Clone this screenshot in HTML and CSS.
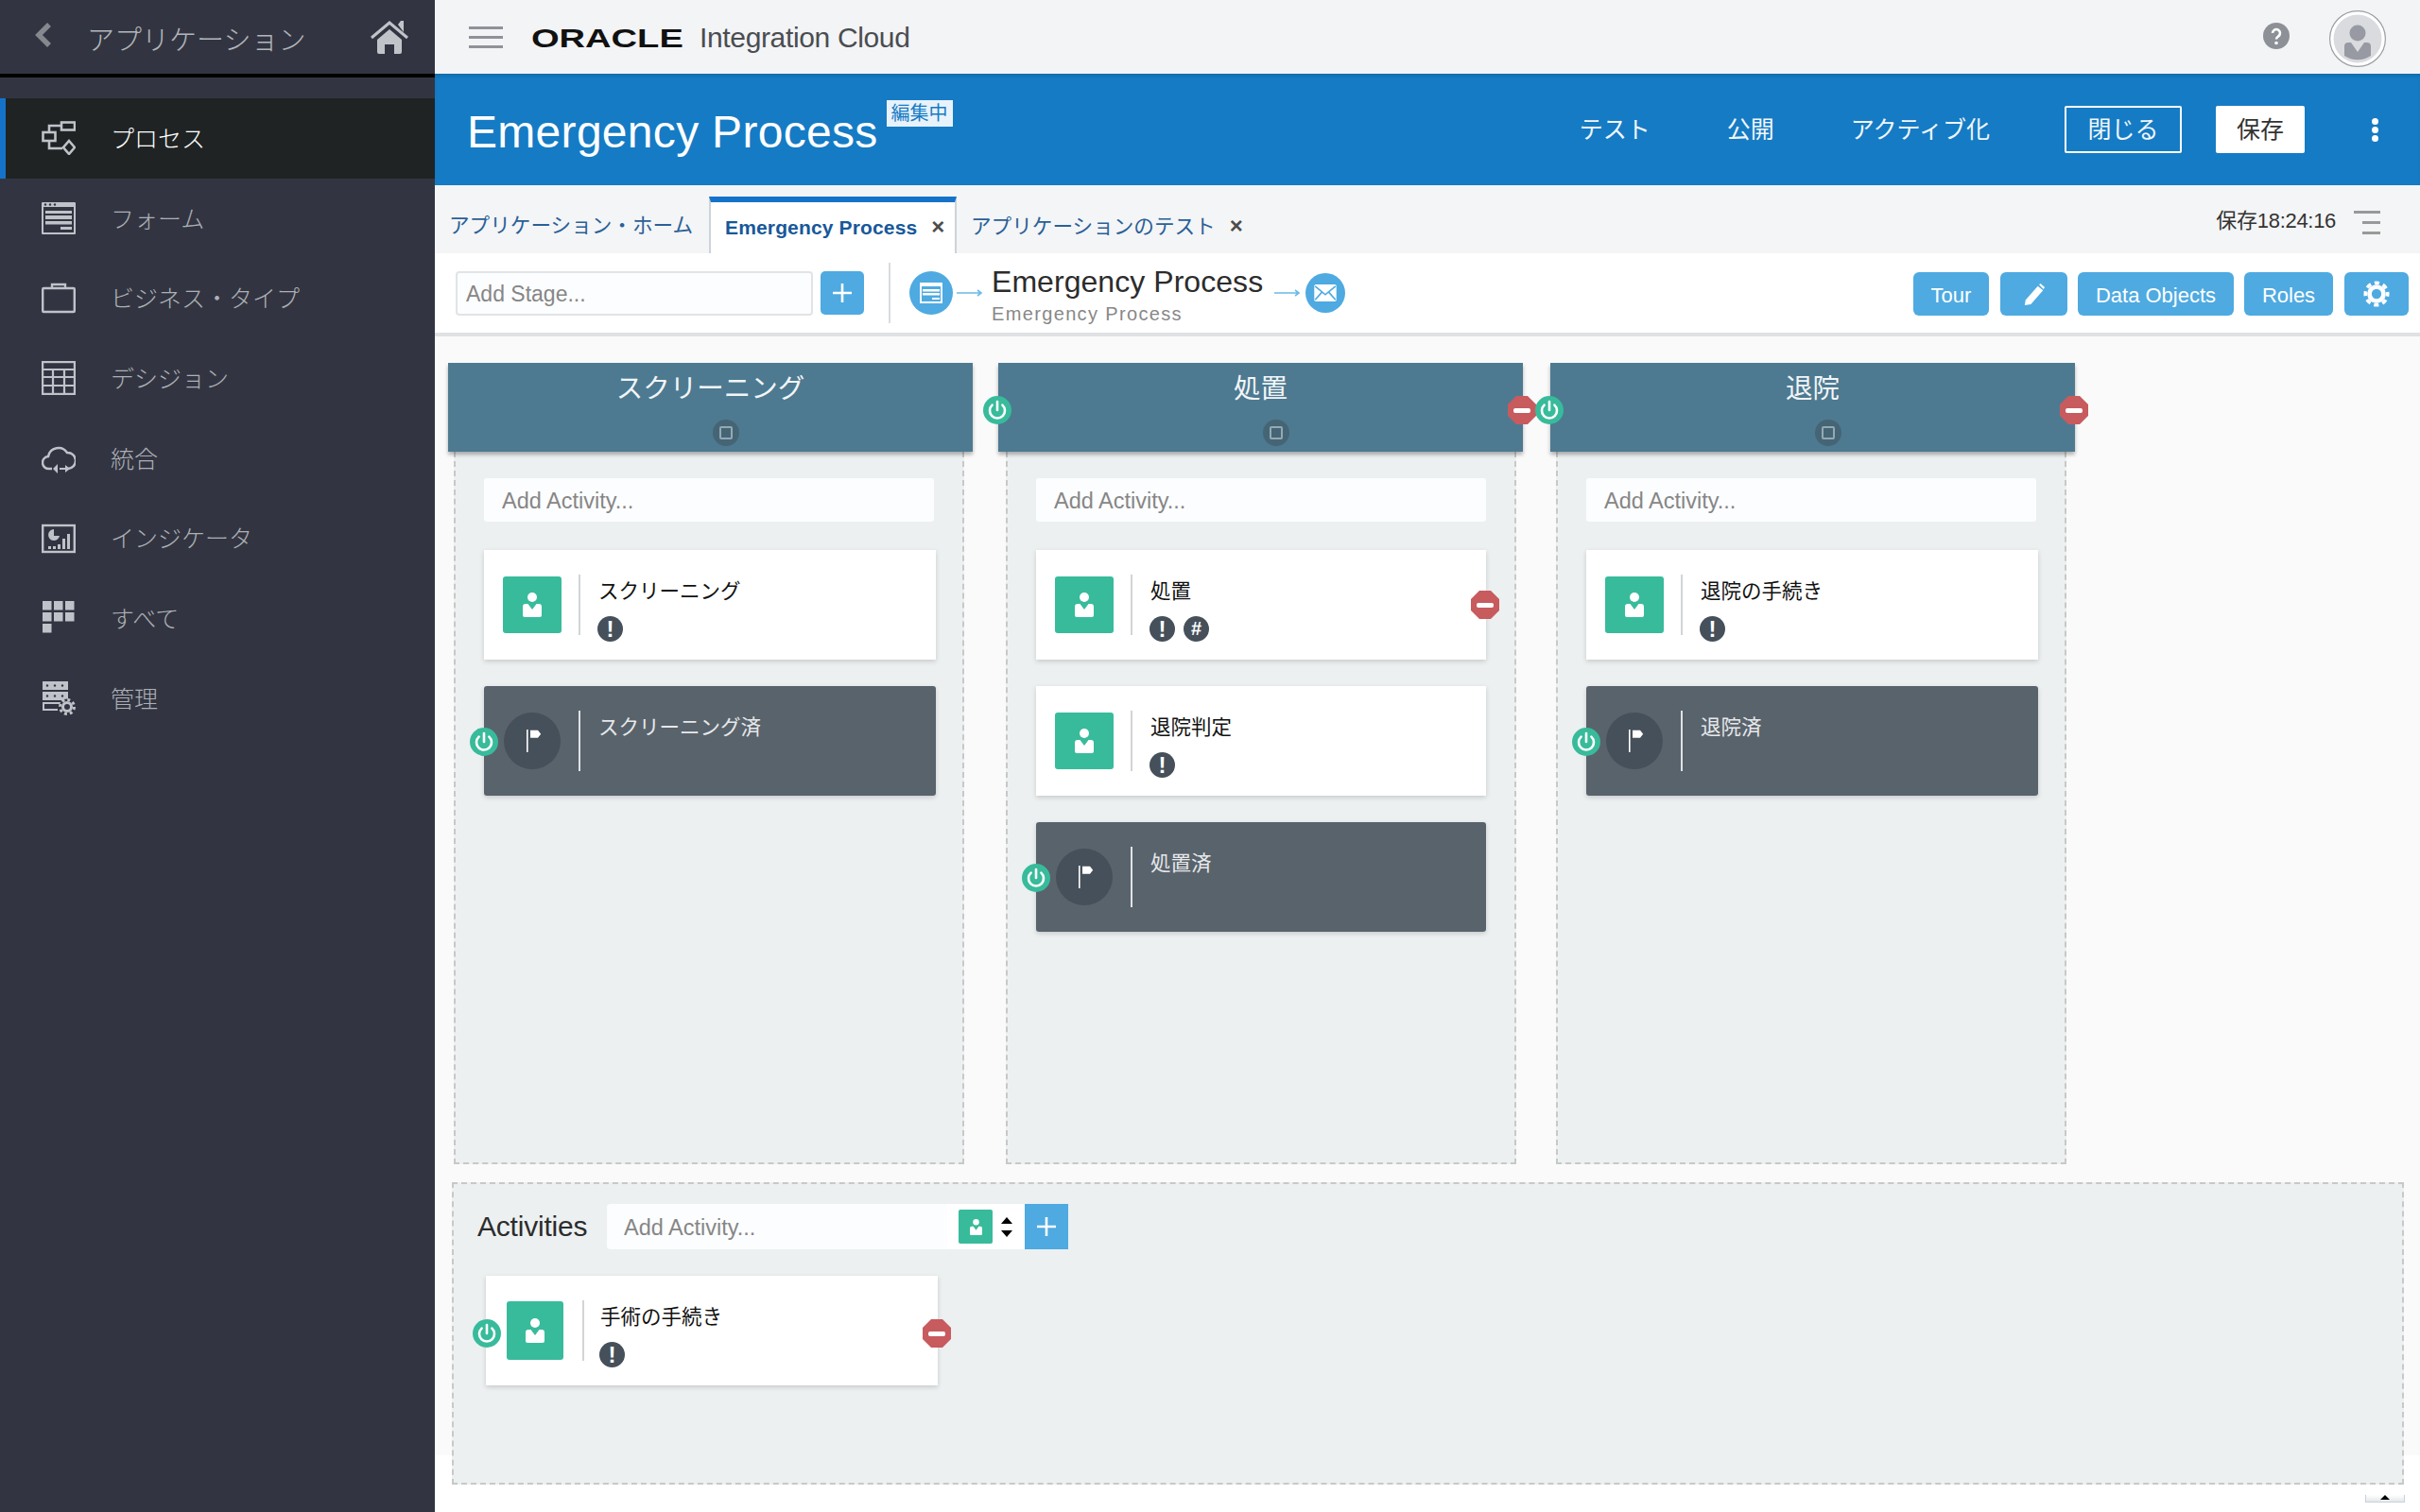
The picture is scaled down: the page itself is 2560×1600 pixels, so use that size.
FILE: index.html
```html
<!DOCTYPE html>
<html lang="ja">
<head>
<meta charset="utf-8">
<title>Emergency Process</title>
<link rel="stylesheet" href="styles.css">
</head>
<body>
<svg class="defs" width="0" height="0" aria-hidden="true">
  <defs>
    <symbol id="person" viewBox="0 0 20 26"><circle cx="10" cy="5" r="5" fill="#fff"/><path d="M0 15q0-3 3-3h2.500l4.500 6 4.500-6H17q3 0 3 3v9q0 2-2 2H2q-2 0-2-2z" fill="#fff"/></symbol>
    <symbol id="power" viewBox="0 0 30 30"><path d="M9.600 9.600a8 8 0 1 0 10.800 0" fill="none" stroke="#fff" stroke-width="2.600" stroke-linecap="round"/><path d="M15 6v9" stroke="#fff" stroke-width="2.600" stroke-linecap="round"/></symbol>
    <symbol id="flag" viewBox="0 0 20 30"><path d="M1 0v30" stroke="#fff" stroke-width="2"/><path d="M5 1h10l4 5-4 5H5z" fill="#fff"/></symbol>
  </defs>
</svg>
<div class="app">
  <aside class="sidebar">
    <div class="side-head">
      <svg class="chev" viewBox="0 0 18 26"><path d="M15 2 4 13l11 11" fill="none" stroke="#85888d" stroke-width="5.500"/></svg>
      <span class="side-title">アプリケーション</span>
      <svg class="home" viewBox="0 0 40 36"><path d="M1 19 20 3l19 16" fill="none" stroke="#c0c4c9" stroke-width="3"/><path d="M29 5l3-4h3v12z" fill="#c0c4c9"/><path d="M7 21 20 10l13 11v13a2 2 0 0 1-2 2h-6V26h-10v10H9a2 2 0 0 1-2-2z" fill="#c0c4c9"/></svg>
    </div>
    <nav class="side-nav">
      <a class="nav-item active">
        <svg class="nav-icon" viewBox="0 0 36 36"><g fill="none" stroke="#bfc3c9" stroke-width="2.600"><rect x="21" y="1.500" width="14" height="8"/><rect x="1.500" y="12" width="13" height="9"/><path d="M21 5H8v7M8 21v8h14"/><path d="M29 21l6 7-6 7-6-7z"/></g></svg>
        <span>プロセス</span>
      </a>
      <a class="nav-item">
        <svg class="nav-icon" viewBox="0 0 36 36"><rect y="1" width="36" height="34" rx="1" fill="#bfc3c9"/><rect x="2" y="6" width="32" height="27" fill="#323541"/><g fill="#323541"><circle cx="4" cy="3.500" r="1.200"/><circle cx="9" cy="3.500" r="1.200"/><circle cx="14" cy="3.500" r="1.200"/></g><g fill="#bfc3c9"><rect x="4" y="10" width="28" height="3"/><rect x="4" y="15" width="28" height="4"/><rect x="4" y="21" width="28" height="3.500"/><rect x="20" y="27" width="12" height="3"/></g></svg>
        <span>フォーム</span>
      </a>
      <a class="nav-item">
        <svg class="nav-icon" viewBox="0 0 36 36"><g fill="none" stroke="#bfc3c9" stroke-width="2.400"><rect x="1.200" y="7" width="33.600" height="25" rx="1"/><path d="M11 7V3h14v4"/></g></svg>
        <span>ビジネス・タイプ</span>
      </a>
      <a class="nav-item">
        <svg class="nav-icon" viewBox="0 0 36 36"><g fill="none" stroke="#bfc3c9" stroke-width="2.200"><rect x="1.100" y="1.100" width="33.800" height="33.800"/><path d="M1 9h34M1 17h34M1 26h34M12 9v26M24 9v26"/></g></svg>
        <span>デシジョン</span>
      </a>
      <a class="nav-item">
        <svg class="nav-icon" viewBox="0 0 36 36"><path d="M11 29H8a6.500 6.500 0 0 1-1-13 11 11 0 0 1 20-4 8.500 8.500 0 0 1 1 17h-2" fill="none" stroke="#bfc3c9" stroke-width="2.500"/><path d="M17 24l-5 5 5 5z M19 28h6v-3l5 4-5 4v-3h-6z" fill="#bfc3c9"/></svg>
        <span>統合</span>
      </a>
      <a class="nav-item">
        <svg class="nav-icon" viewBox="0 0 36 36"><rect x="1.200" y="4" width="33.600" height="28" fill="none" stroke="#bfc3c9" stroke-width="2.400"/><path d="M13 8a6 6 0 1 0 6 7h-6z" fill="#bfc3c9"/><g fill="#bfc3c9"><rect x="7" y="26" width="3" height="3"/><rect x="12" y="26" width="3" height="3"/><rect x="17" y="24" width="3" height="5"/><rect x="22" y="18" width="3" height="11"/><rect x="27" y="13" width="3" height="16"/></g></svg>
        <span>インジケータ</span>
      </a>
      <a class="nav-item">
        <svg class="nav-icon" viewBox="0 0 36 36"><g fill="#bfc3c9"><rect x="1" y="0" width="9.500" height="9.500"/><rect x="13" y="0" width="9.500" height="9.500"/><rect x="25" y="0" width="9.500" height="9.500"/><rect x="1" y="12" width="9.500" height="9.500"/><rect x="13" y="12" width="9.500" height="9.500"/><rect x="25" y="12" width="9.500" height="9.500"/><rect x="1" y="24" width="9.500" height="9.500"/></g></svg>
        <span>すべて</span>
      </a>
      <a class="nav-item">
        <svg class="nav-icon" viewBox="0 0 36 36"><path d="M1 0h27v9H1zM1 11h27v9H1z" fill="#bfc3c9"/><path d="M2 23h20" stroke="#bfc3c9" stroke-width="2"/><path d="M2 22v8h15" fill="none" stroke="#bfc3c9" stroke-width="2"/><g fill="#323541"><circle cx="6" cy="4.500" r="1.200"/><circle cx="14" cy="4.500" r="1.200"/><circle cx="22" cy="4.500" r="1.200"/><circle cx="6" cy="15.500" r="1.200"/><circle cx="14" cy="15.500" r="1.200"/><circle cx="22" cy="15.500" r="1.200"/></g><circle cx="27" cy="27" r="8.500" fill="#323541"/><circle cx="27" cy="27" r="4.500" fill="none" stroke="#bfc3c9" stroke-width="3"/><circle cx="27" cy="27" r="7.500" fill="none" stroke="#bfc3c9" stroke-width="3" stroke-dasharray="3 2.900"/></svg>
        <span>管理</span>
      </a>
    </nav>
  </aside>
  <main class="main">
    <header class="topbar">
      <div class="burger"><i></i><i></i><i></i></div>
      <span class="oracle"><span class="oracle-word">ORACLE</span></span>
      <span class="product">Integration Cloud</span>
      <svg class="help" viewBox="0 0 28 28"><circle cx="14" cy="14" r="14" fill="#8d9096"/><path d="M10 11a4 4 0 1 1 6 3.500c-1.500 1-2 1.500-2 3" fill="none" stroke="#fff" stroke-width="2.600"/><circle cx="14" cy="21.500" r="1.800" fill="#fff"/></svg>
      <svg class="avatar" viewBox="0 0 60 60"><circle cx="30" cy="30" r="29.400" fill="#fff" stroke="#9b9ea3" stroke-width="1.200"/><circle cx="30" cy="30" r="25.500" fill="#d9dbde"/><circle cx="30" cy="24" r="8.500" fill="#979aa2"/><path d="M16 48V38q0-4 4-4h3l7 10 7-10h3q4 0 4 4v10a25 25 0 0 1-28 0z" fill="#979aa2"/></svg>
    </header>
    <section class="band">
      <h1 class="band-title">Emergency Process</h1>
      <span class="badge">編集中</span>
      <div class="band-actions">
        <a class="band-link">テスト</a>
        <a class="band-link">公開</a>
        <a class="band-link">アクティブ化</a>
        <button class="btn-close">閉じる</button>
        <button class="btn-save">保存</button>
        <div class="kebab"><i></i><i></i><i></i></div>
      </div>
    </section>
    <section class="tabs">
      <a class="tab">アプリケーション・ホーム</a>
      <a class="tab tab-active">Emergency Process<span class="tab-x">×</span></a>
      <a class="tab">アプリケーションのテスト<span class="tab-x">×</span></a>
      <span class="saved">保存18:24:16</span>
      <div class="saved-menu"><i></i><i></i><i></i></div>
    </section>
    <section class="toolbar">
      <input class="stage-input" placeholder="Add Stage...">
      <button class="tool-plus"><svg viewBox="0 0 24 24"><path d="M12 2v20M2 12h20" stroke="#fff" stroke-width="2.600"/></svg></button>
      <span class="tool-sep"></span>
      <span class="flow-dot"><svg viewBox="0 0 26 26"><rect x="1" y="2" width="24" height="22" fill="#fff"/><rect x="3" y="6" width="20" height="16" fill="#4eaae1"/><path d="M4 9h18v2.500H4zM4 13h18v2.500H4zM14 18h8v2H14z" fill="#fff"/></svg></span>
      <svg class="flow-arrow" viewBox="0 0 28 12"><path d="M0 6h26M22 3l4 3-4 3" fill="none" stroke="#6cbbe6" stroke-width="1.600"/></svg>
      <div class="proc-name">
        <div class="proc-title">Emergency Process</div>
        <div class="proc-sub">Emergency Process</div>
      </div>
      <svg class="flow-arrow flow-arrow-end" viewBox="0 0 28 12"><path d="M0 6h26M22 3l4 3-4 3" fill="none" stroke="#6cbbe6" stroke-width="1.600"/></svg>
      <span class="flow-dot flow-end"><svg viewBox="0 0 26 20"><rect width="26" height="20" rx="2" fill="#fff"/><path d="M1 2l12 10L25 2M1 18l8-9M25 18l-8-9" fill="none" stroke="#4eaae1" stroke-width="1.800"/></svg></span>
      <div class="tool-btns">
        <button class="tool-btn btn-tour">Tour</button>
        <button class="tool-btn btn-edit"><svg viewBox="0 0 26 26"><path d="M3 20 17 4l6 5L9 25l-7 1z" fill="#fff"/><path d="M18.500 2.500l1.500-1.500 5 4.500-1.500 2z" fill="#fff"/></svg></button>
        <button class="tool-btn btn-data">Data Objects</button>
        <button class="tool-btn btn-roles">Roles</button>
        <button class="tool-btn btn-gear"><svg viewBox="0 0 30 30"><circle cx="15" cy="15" r="8" fill="none" stroke="#fff" stroke-width="5"/><circle cx="15" cy="15" r="12.500" fill="none" stroke="#fff" stroke-width="4" stroke-dasharray="5.500 4.320" stroke-dashoffset="2.700"/></svg></button>
      </div>
    </section>
    <section class="canvas">
      <div class="stages">
        <div class="stage">
          <div class="stage-head">
            <span class="stage-name">スクリーニング</span>
            <span class="stage-toggle"><i></i></span>
          </div>
          <div class="stage-body">
            <input class="act-input" placeholder="Add Activity...">
            <div class="card">
              <span class="act-icon"><svg viewBox="0 0 20 26"><use href="#person"/></svg></span>
              <span class="card-sep"></span>
              <div class="card-body">
                <div class="card-title">スクリーニング</div>
                <div class="card-marks"><span class="mark">!</span></div>
              </div>
            </div>
            <div class="card card-dark">
              <span class="pow pow-card"><svg viewBox="0 0 30 30"><use href="#power"/></svg></span>
              <span class="end-icon"><svg viewBox="0 0 20 30"><use href="#flag"/></svg></span>
              <span class="card-sep"></span>
              <div class="card-body"><div class="card-title">スクリーニング済</div></div>
            </div>
          </div>
        </div>
        <div class="stage stage-mid">
          <span class="pow pow-stage"><svg viewBox="0 0 30 30"><use href="#power"/></svg></span>
          <span class="del del-stage"></span>
          <div class="stage-head">
            <span class="stage-name">処置</span>
            <span class="stage-toggle"><i></i></span>
          </div>
          <div class="stage-body">
            <input class="act-input" placeholder="Add Activity...">
            <div class="card">
              <span class="del del-card"></span>
              <span class="act-icon"><svg viewBox="0 0 20 26"><use href="#person"/></svg></span>
              <span class="card-sep"></span>
              <div class="card-body">
                <div class="card-title">処置</div>
                <div class="card-marks"><span class="mark">!</span><span class="mark mark-hash">#</span></div>
              </div>
            </div>
            <div class="card">
              <span class="act-icon"><svg viewBox="0 0 20 26"><use href="#person"/></svg></span>
              <span class="card-sep"></span>
              <div class="card-body">
                <div class="card-title">退院判定</div>
                <div class="card-marks"><span class="mark">!</span></div>
              </div>
            </div>
            <div class="card card-dark">
              <span class="pow pow-card"><svg viewBox="0 0 30 30"><use href="#power"/></svg></span>
              <span class="end-icon"><svg viewBox="0 0 20 30"><use href="#flag"/></svg></span>
              <span class="card-sep"></span>
              <div class="card-body"><div class="card-title">処置済</div></div>
            </div>
          </div>
        </div>
        <div class="stage stage-last">
          <span class="pow pow-stage"><svg viewBox="0 0 30 30"><use href="#power"/></svg></span>
          <span class="del del-stage"></span>
          <div class="stage-head">
            <span class="stage-name">退院</span>
            <span class="stage-toggle"><i></i></span>
          </div>
          <div class="stage-body">
            <input class="act-input" placeholder="Add Activity...">
            <div class="card">
              <span class="act-icon"><svg viewBox="0 0 20 26"><use href="#person"/></svg></span>
              <span class="card-sep"></span>
              <div class="card-body">
                <div class="card-title">退院の手続き</div>
                <div class="card-marks"><span class="mark">!</span></div>
              </div>
            </div>
            <div class="card card-dark">
              <span class="pow pow-card"><svg viewBox="0 0 30 30"><use href="#power"/></svg></span>
              <span class="end-icon"><svg viewBox="0 0 20 30"><use href="#flag"/></svg></span>
              <span class="card-sep"></span>
              <div class="card-body"><div class="card-title">退院済</div></div>
            </div>
          </div>
        </div>
      </div>
      <div class="activities">
        <div class="act-head">
          <span class="act-label">Activities</span>
          <input class="act-add" placeholder="Add Activity...">
          <div class="act-type">
            <span class="act-mini"><svg viewBox="0 0 20 26"><use href="#person"/></svg></span>
            <span class="spin"><i class="up"></i><i class="down"></i></span>
          </div>
          <button class="act-plus"><svg viewBox="0 0 24 24"><path d="M12 2v20M2 12h20" stroke="#fff" stroke-width="2.600"/></svg></button>
        </div>
        <div class="card card-free">
          <span class="pow pow-free"><svg viewBox="0 0 30 30"><use href="#power"/></svg></span>
          <span class="del del-free"></span>
          <span class="act-icon"><svg viewBox="0 0 20 26"><use href="#person"/></svg></span>
          <span class="card-sep"></span>
          <div class="card-body">
            <div class="card-title">手術の手続き</div>
            <div class="card-marks"><span class="mark">!</span></div>
          </div>
        </div>
        <span class="corner"><i></i></span>
      </div>
    </section>
  </main>
</div>
</body>
</html>
```
FILE: styles.css
```css
* { box-sizing: border-box; }
html, body { margin: 0; padding: 0; height: 100%; background: #fff; }
body { font-family: "Liberation Sans", "Noto Sans CJK JP", sans-serif; overflow: hidden; }
.defs { position: absolute; }
svg { display: block; }
button { font-family: inherit; border: 0; padding: 0; }
input { font-family: inherit; outline: 0; }
i { display: block; }

.app { display: flex; height: 1600px; }

.sidebar { width: 460px; flex: none; background: #323541; }
.side-head { height: 82px; border-bottom: 4px solid #000; display: flex; align-items: center; padding: 0 28px 0 37px; }
.chev { width: 18px; height: 26px; margin-top: -4px; }
.side-title { margin-left: 37px; font-size: 29px; color: #b2b5bb; font-weight: 300; padding-top: 2px; }
.home { width: 40px; height: 36px; margin-left: auto; margin-top: -1px; }
.side-nav { padding-top: 22px; }
.nav-item { height: 84.7px; display: flex; align-items: center; padding-left: 44px; font-size: 25px; color: #adb0b6; font-weight: 300; }
.nav-item span { margin-top: -3px; }
.nav-item.active { background: #1f2324; color: #fff; box-shadow: inset 6px 0 0 #1473c9; }
.nav-icon { width: 36px; height: 36px; margin-right: 37px; }

.main { flex: 1; min-width: 0; display: flex; flex-direction: column; }

.topbar { height: 78px; background: #f3f4f6; display: flex; align-items: center; padding-left: 36px; }
.burger { width: 36px; }
.burger i { height: 3px; background: #8f9398; margin: 7px 0; }
.oracle { margin-left: 30px; width: 161px; height: 30px; overflow: visible; padding-top: 2px; }
.oracle-word { display: inline-block; font-size: 28px; line-height: 30px; font-weight: 700; color: #111; transform: scaleX(1.36); transform-origin: left center; letter-spacing: 0; }
.product { margin-left: 17px; font-size: 30px; color: #4a4d50; letter-spacing: -0.35px; padding-top: 2px; }
.help { width: 28px; height: 28px; margin-left: auto; margin-top: -2px; }
.avatar { width: 60px; height: 60px; margin-left: 42px; margin-right: 36px; margin-top: 4px; }

.band { height: 118px; background: #157bc4; box-shadow: inset 0 4px 4px -2px rgba(0,0,0,.15); display: flex; align-items: flex-start; padding-left: 34px; color: #fff; }
.band-title { margin: 27px 0 0; font-size: 48px; line-height: 70px; font-weight: 400; letter-spacing: 0.3px; }
.badge { margin: 28px 0 0 9px; width: 70px; height: 28px; background: #e8f2fa; color: #157bc4; font-size: 20px; line-height: 28px; text-align: center; white-space: nowrap; }
.band-actions { margin-left: auto; height: 100%; display: flex; align-items: center; padding-right: 43px; }
.band-link { font-size: 25px; margin-right: 81px; color: #f1f6fb; margin-top: -5px; }
.band-link:nth-child(3) { margin-right: 79px; }
.btn-close { width: 124px; height: 50px; border: 2px solid #fff; background: transparent; border-radius: 2px; color: #f1f6fb; font-size: 25px; padding-bottom: 4px; }
.btn-save { width: 94px; height: 50px; margin-left: 36px; background: #fff; color: #333; font-size: 25px; border-radius: 2px; padding-bottom: 4px; }
.kebab { width: 8px; margin-left: 71px; }
.kebab i { width: 7px; height: 7px; border-radius: 50%; background: #fff; margin: 2px 0; }

.tabs { height: 72px; background: #f4f5f6; display: flex; align-items: flex-end; color: #1f5f9a; padding-left: 15px; }
.tab { height: 60px; font-size: 21.6px; line-height: 62px; color: #2a6097; white-space: nowrap; }
.tab:first-child { width: 275px; }
.tab-active { width: 262px; background: #fff; border-top: 6px solid #1473c9; border-left: 2px solid #cdd3da; border-right: 2px solid #cdd3da; padding-left: 15px; font-weight: 700; color: #17589a; font-size: 21px; line-height: 52px; letter-spacing: 0.15px; }
.tab-x { margin-left: 15px; font-weight: 700; color: #4d4d4d; font-size: 24px; }
.tab:nth-child(3) { padding-left: 15px; }
.saved { margin-left: auto; height: 60px; line-height: 52px; font-size: 22px; color: #333; letter-spacing: -0.3px; }
.saved-menu { width: 28px; margin: 0 42px 0 19px; height: 52px; padding-top: 7px; }
.saved-menu i { height: 3px; background: #999; margin: 0 0 8px 9px; }
.saved-menu i:first-child { margin-left: 0; }

.toolbar { height: 88px; background: #fff; border-bottom: 4px solid #dfe1e3; display: flex; align-items: center; padding-left: 22px; }
.stage-input { width: 378px; height: 47px; border: 2px solid #e0e4e6; border-radius: 4px; background: #fcfdfe; padding: 2px 9px 0; font-size: 23px; }
.stage-input::placeholder, .act-input::placeholder, .act-add::placeholder { color: #868686; opacity: 1; }
.tool-plus { width: 46px; height: 46px; margin-left: 8px; background: #4eaae1; border-radius: 5px; display: flex; align-items: center; justify-content: center; }
.tool-plus svg { width: 24px; height: 24px; }
.tool-sep { width: 2px; height: 64px; background: #d9dcdf; margin-left: 26px; }
.flow-dot { width: 46px; height: 46px; margin-left: 20px; border-radius: 50%; background: #4eaae1; display: flex; align-items: center; justify-content: center; flex: none; }
.flow-dot svg { width: 26px; height: 26px; }
.flow-end { width: 42px; height: 42px; margin-left: 5px; }
.flow-end svg { width: 24px; height: 18px; }
.flow-arrow { width: 28px; height: 12px; margin-left: 4px; }
.flow-arrow-end { margin-left: 12px; }
.proc-name { margin-left: 9px; width: 287px; }
.proc-title { font-size: 32px; line-height: 38px; color: #2c2c2c; white-space: nowrap; letter-spacing: 0.05px; }
.proc-sub { font-size: 20px; line-height: 24px; color: #888; letter-spacing: 1.35px; white-space: nowrap; padding-top: 3px; margin-bottom: -3px; }
.tool-btns { margin-left: auto; display: flex; padding-right: 12px; gap: 11px; margin-top: 2px; }
.tool-btn { height: 46px; background: #4eaae1; border-radius: 6px; color: #fff; font-size: 22px; display: flex; align-items: center; justify-content: center; padding-top: 4px; }
.tool-btn svg { width: 28px; height: 28px; margin-top: -4px; }
.btn-tour { width: 80px; }
.btn-edit { width: 71px; margin-left: 1px; }
.btn-edit svg { width: 24px; height: 24px; }
.btn-data { width: 165px; }
.btn-roles { width: 94px; }
.btn-gear { width: 68px; margin-left: 1px; }

.canvas { height: 1184px; background: #fafafa; padding: 28px 0 0 14px; }
.stages { display: flex; gap: 27px; }
.stage { position: relative; width: 555px; height: 848px; }
.stage-last { margin-left: 2px; }
.stage-head { height: 94px; background: #4d7a91; box-shadow: 0 3px 4px rgba(0,0,0,.3); position: relative; z-index: 1; text-align: center; color: #f2f5f7; font-size: 28.5px; line-height: 54px; }
.stage-name { display: block; }
.stage-toggle { position: absolute; left: 280px; top: 60px; width: 28px; height: 28px; border-radius: 50%; background: #456575; display: flex; align-items: center; justify-content: center; }
.stage-toggle i { width: 14px; height: 14px; border: 2px solid #93a9b5; border-radius: 2px; }
.stage-body { width: 540px; height: 754px; margin-left: 6px; background: #ecf0f1; border: 2px dashed #c8c8c8; border-top: 0; padding: 28px 0 0 30px; }
.stage-mid .stage-body { margin-left: 8px; }
.act-input { display: block; width: 476px; height: 46px; border: 0; border-radius: 3px; background: #fcfdfe; padding: 2px 19px 0; font-size: 23.500px; margin-bottom: 30px; }

.card { position: relative; width: 478px; height: 116px; background: #fff; box-shadow: 0 2px 5px rgba(0,0,0,.16); display: flex; align-items: center; padding-left: 20px; margin-bottom: 28px; }
.stage-mid .card { width: 476px; }
.card-dark { background: #59636c; border-radius: 3px; }
.act-icon { width: 62px; height: 60px; background: #38bb9b; border-radius: 3px; flex: none; display: flex; align-items: center; justify-content: center; }
.act-icon svg { width: 20px; height: 26px; }
.end-icon { width: 60px; height: 60px; margin-left: 1px; margin-right: 1px; border-radius: 50%; background: #45505a; flex: none; display: flex; align-items: center; justify-content: center; }
.end-icon svg { width: 16px; height: 24px; margin-left: 4px; }
.card-sep { width: 2px; height: 64px; margin-left: 18px; background: #d2d4d6; flex: none; }
.card-dark .card-sep { background: #dfe2e4; }
.card-body { margin-left: 19px; height: 64px; align-self: flex-start; margin-top: 26px; }
.card-title { font-size: 21.5px; line-height: 37px; color: #111; white-space: nowrap; }
.card-dark .card-title { color: #e6e8ea; }
.card-marks { display: flex; gap: 9px; margin-top: 7px; margin-left: -1px; }
.mark { width: 27px; height: 27px; border-radius: 50%; background: #45505a; color: #fff; font-size: 24px; font-weight: 700; line-height: 27px; text-align: center; }
.mark-hash { font-size: 20px; }

.pow { position: absolute; width: 30px; height: 30px; border-radius: 50%; background: #38bb9b; z-index: 3; }
.pow svg { width: 30px; height: 30px; }
.pow-stage { left: -16px; top: 35px; }
.pow-card { left: -15px; top: 44px; }
.pow-free { left: -14px; top: 46px; }
.del { position: absolute; width: 30px; height: 30px; background: #c75b5e; clip-path: polygon(30% 0, 70% 0, 100% 30%, 100% 70%, 70% 100%, 30% 100%, 0 70%, 0 30%); z-index: 2; }
.del::after { content: ""; position: absolute; left: 6px; right: 6px; top: 12.5px; height: 5px; border-radius: 2px; background: #fff; }
.del-stage { right: -14px; top: 35px; }
.del-card { right: -14px; top: 43px; }
.del-free { right: -14px; top: 46px; }

.activities { position: relative; width: 2065px; height: 320px; margin: 19px 0 0 4px; background: #ecf0f1; border: 2px dashed #c8c8c8; padding: 21px 0 0 25px; }
.act-head { display: flex; align-items: center; height: 48px; }
.act-label { font-size: 30px; color: #2c2c2c; letter-spacing: -0.2px; width: 137px; flex: none; }
.act-add { width: 360px; height: 48px; border: 0; border-radius: 4px 0 0 4px; background: #fcfdfe; padding: 3px 18px 0; font-size: 23.500px; }
.act-type { width: 82px; height: 48px; background: #fff; display: flex; align-items: center; padding-left: 12px; }
.act-mini { width: 36px; height: 36px; background: #38bb9b; border-radius: 2px; display: flex; align-items: center; justify-content: center; }
.act-mini svg { width: 13px; height: 17px; }
.spin { margin-left: 9px; }
.spin i { width: 0; height: 0; border-left: 6px solid transparent; border-right: 6px solid transparent; }
.spin .up { border-bottom: 7px solid #000; margin-bottom: 7px; }
.spin .down { border-top: 7px solid #000; }
.act-plus { width: 46px; height: 48px; background: #4eaae1; display: flex; align-items: center; justify-content: center; }
.act-plus svg { width: 24px; height: 24px; }
.card-free { margin: 28px 0 0 9px; padding-left: 22px; }
.card-free .act-icon { width: 60px; height: 62px; }
.card-free .card-sep { margin-left: 20px; }
.card-free .card-body { margin-left: 17px; }
.corner { position: absolute; right: -3px; bottom: -21px; width: 42px; height: 8px; background: linear-gradient(#fff, #e3e7ea); border: 1px solid #c9d1d8; border-top: 0; display: flex; justify-content: center; }
.corner i { width: 0; height: 0; border-left: 5px solid transparent; border-right: 5px solid transparent; border-bottom: 5px solid #000; }
```
